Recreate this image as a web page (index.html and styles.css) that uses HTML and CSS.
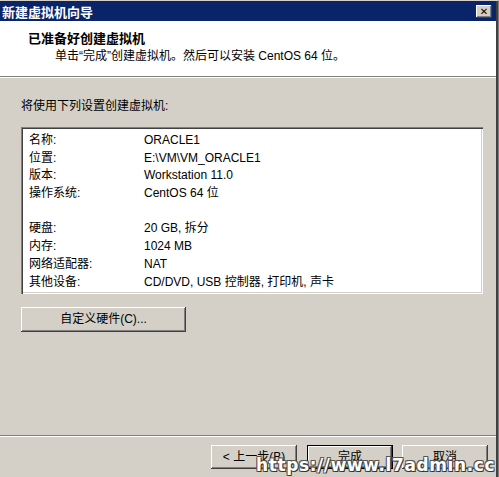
FILE: index.html
```html
<!DOCTYPE html>
<html lang="zh-CN">
<head>
<meta charset="utf-8">
<title>新建虚拟机向导</title>
<link rel="stylesheet" href="styles.css">
</head>
<body>
<div class="window">
  <div class="titlebar">
    <span class="title">新建虚拟机向导</span>
    <span class="close">✕</span>
  </div>
  <div class="header">
    <div class="heading">已准备好创建虚拟机</div>
    <div class="sub">单击“完成”创建虚拟机。然后可以安装 CentOS 64 位。</div>
  </div>
  <div class="content">
    <div class="intro">将使用下列设置创建虚拟机:</div>
    <div class="summary">
      <div class="row"><span class="k">名称:</span><span class="v">ORACLE1</span></div>
      <div class="row"><span class="k">位置:</span><span class="v">E:\VM\VM_ORACLE1</span></div>
      <div class="row"><span class="k">版本:</span><span class="v">Workstation 11.0</span></div>
      <div class="row"><span class="k">操作系统:</span><span class="v">CentOS 64 位</span></div>
      <div class="row"><span class="k"></span><span class="v"></span></div>
      <div class="row"><span class="k">硬盘:</span><span class="v">20 GB, 拆分</span></div>
      <div class="row"><span class="k">内存:</span><span class="v">1024 MB</span></div>
      <div class="row"><span class="k">网络适配器:</span><span class="v">NAT</span></div>
      <div class="row"><span class="k">其他设备:</span><span class="v">CD/DVD, USB 控制器, 打印机, 声卡</span></div>
    </div>
    <div class="btn custom">自定义硬件(C)...</div>
  </div>
  <div class="footer">
    <div class="btn nav">&lt; 上一步(B)</div>
    <div class="btn nav default">完成</div>
    <div class="btn nav last">取消</div>
  </div>
  <div class="watermark">https://www.l7admin.cc</div>
</div>
</body>
</html>
```
FILE: styles.css
```css
html, body {
  margin: 0;
  padding: 0;
}
body {
  width: 499px;
  height: 477px;
  overflow: hidden;
  background: #d4d0c8;
  font-family: "Liberation Sans", "Noto Sans CJK SC", sans-serif;
  font-size: 12px;
  color: #000;
}
.window {
  position: relative;
  width: 499px;
  height: 477px;
  box-sizing: border-box;
  border-top: 1px solid #d4d0c8;
  border-right: 1px solid #808080;
  box-shadow: inset -2px 0 0 #404040;
  display: flex;
  flex-direction: column;
}
.titlebar {
  height: 20px;
  flex: none;
  background: #0a246a;
  display: flex;
  align-items: center;
  justify-content: space-between;
  padding: 0 4px 0 2px;
  margin-right: 2px;
}
.title {
  color: #fff;
  font-weight: bold;
  font-size: 13px;
  font-family: "Noto Sans CJK SC", sans-serif;
}
.close {
  width: 16px;
  height: 13px;
  background: #d4d0c8;
  box-shadow: inset -1px -1px #404040, inset 1px 1px #fff, inset -2px -2px #808080;
  font-size: 10px;
  font-weight: bold;
  line-height: 13px;
  text-align: center;
  color: #000;
  font-family: "DejaVu Sans", sans-serif;
}
.header {
  flex: none;
  background: #fff;
  margin-right: 2px;
  border-top: 1px solid #fff;
  border-bottom: 1px solid #808080;
  box-shadow: 0 1px 0 #fff;
  padding-top: 8px;
  box-sizing: border-box;
  height: 56px;
}
.heading {
  font-weight: bold;
  font-size: 13px;
  padding-left: 28px;
  line-height: 16px;
  font-family: "Noto Sans CJK SC", sans-serif;
}
.sub {
  padding-left: 55px;
  line-height: 16px;
  margin-top: 2px;
}
.content {
  flex: none;
  padding: 21px 0 0 21px;
  height: 359px;
  box-sizing: border-box;
  border-bottom: 1px solid #808080;
  box-shadow: 0 1px 0 #fff;
  margin-right: 2px;
}
.intro {
  line-height: 16px;
}
.summary {
  margin-top: 13px;
  width: 462px;
  height: 167px;
  box-sizing: border-box;
  background: #fff;
  box-shadow: inset 1px 1px #808080, inset 2px 2px #404040, inset -1px -1px #fff, inset -2px -2px #d4d0c8;
  padding: 5px 0 0 8px;
}
.row {
  display: flex;
  height: 17.7px;
  line-height: 17.7px;
}
.k {
  width: 115px;
}
.btn {
  background: #d4d0c8;
  box-shadow: inset -1px -1px #404040, inset 1px 1px #fff, inset -2px -2px #808080;
  text-align: center;
  box-sizing: border-box;
}
.custom {
  margin-top: 13px;
  width: 165px;
  height: 25px;
  line-height: 25px;
}
.footer {
  flex: none;
  display: flex;
  justify-content: flex-end;
  padding: 9px 10px 0 0;
  gap: 10px;
}
.nav {
  width: 86px;
  height: 24px;
  line-height: 24px;
}
.default {
  border: 1px solid #000;
  line-height: 22px;
}
.last {
  margin-left: -1px;
}
.watermark {
  position: absolute;
  left: 256px;
  top: 454px;
  color: #fff;
  font-family: "DejaVu Sans", sans-serif;
  font-weight: bold;
  font-size: 17px;
  letter-spacing: 0.6px;
  text-shadow: 1px 1px 0 #333, -1px -1px 0 #555, 1px -1px 0 #555, -1px 1px 0 #555;
}
```
